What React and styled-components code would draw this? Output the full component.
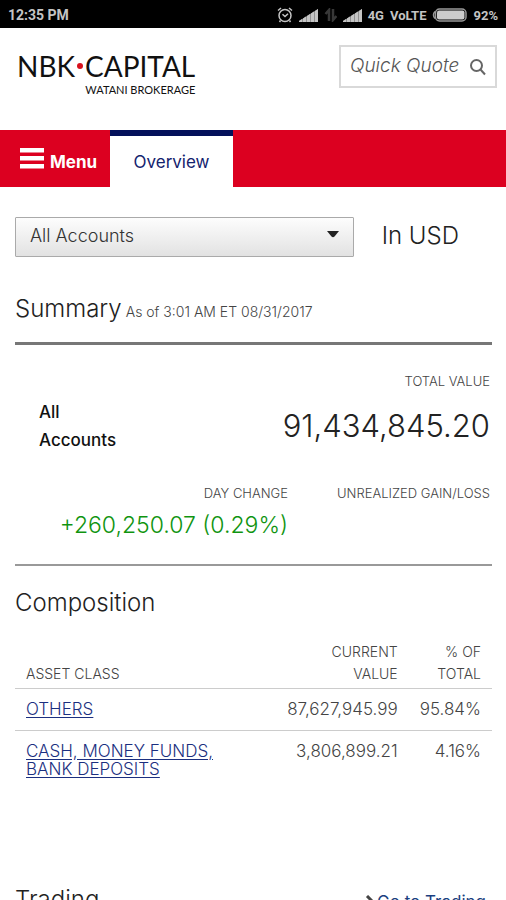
import React, { useState } from "react";
import styled, { createGlobalStyle } from "styled-components";

const GlobalStyle = createGlobalStyle`
  html {
    scrollbar-width: none;
  }
  body {
    margin: 0;
    background: #fff;
    color: #222;
    font-family: Inter, "Open Sans", sans-serif;
    font-size: 17px;
    font-weight: 300;
  }
  * {
    box-sizing: border-box;
  }
`;

const StatusBar = styled.div`
  display: flex;
  align-items: center;
  justify-content: space-between;
  height: 28px;
  padding: 2px 8px 0;
  background: #000;
  color: #c4c4c4;
  font-family: Roboto, sans-serif;
  font-size: 14px;
  font-weight: 700;
`;

const StatusIcons = styled.div`
  display: flex;
  align-items: center;
  gap: 6px;
  font-size: 13px;
`;

const Header = styled.header`
  display: flex;
  justify-content: space-between;
  align-items: flex-start;
  height: 102px;
  padding: 17px 9px 0 17px;
`;

const Logo = styled.a`
  display: flex;
  flex-direction: column;
  align-items: flex-end;
  padding-top: 4px;
  color: #111;
  text-decoration: none;
  font-family: Lato, sans-serif;
`;

const LogoName = styled.span`
  display: flex;
  align-items: center;
  font-size: 28px;
  font-weight: 400;
  line-height: 34px;
`;

const LogoDot = styled.span`
  width: 6px;
  height: 6px;
  margin: 0 2px;
  border-radius: 50%;
  background: #d8101c;
`;

const LogoSub = styled.span`
  font-size: 11px;
  font-weight: 400;
  line-height: 14px;
`;

const Search = styled.form`
  display: flex;
  align-items: center;
  width: 158px;
  height: 43px;
  padding: 0 9px;
  border: 2px solid #d9d9d9;
`;

const SearchInput = styled.input`
  flex: 1;
  min-width: 0;
  padding: 0 0 3px;
  border: 0;
  outline: 0;
  background: none;
  color: #555;
  font: italic 300 19px Inter, sans-serif;

  &::placeholder {
    color: #555;
    opacity: 1;
  }
`;

const SearchButton = styled.button`
  display: flex;
  padding: 0;
  border: 0;
  background: none;
`;

const Nav = styled.nav`
  display: flex;
  height: 57px;
  background: #dc0020;
`;

const MenuButton = styled.button`
  display: flex;
  align-items: center;
  gap: 6px;
  width: 110px;
  padding: 0 0 0 20px;
  border: 0;
  background: none;
  color: #fff;
  font: 700 17px/28px Inter, sans-serif;

  span {
    padding-top: 6px;
  }
`;

const Tab = styled.a`
  width: 123px;
  padding-top: 14px;
  border-top: 6px solid #03105a;
  background: #fff;
  color: #14226e;
  font-size: 17px;
  font-weight: 400;
  line-height: 24px;
  text-align: center;
  text-decoration: none;
`;

const Main = styled.main`
  padding: 30px 14px 0 15px;
`;

const Filters = styled.div`
  display: flex;
  align-items: center;
  gap: 28px;
`;

const SelectWrap = styled.div`
  position: relative;
  width: 71%;
`;

const Select = styled.select`
  appearance: none;
  width: 100%;
  height: 40px;
  padding: 0 14px 4px;
  border: 1px solid #aaa;
  border-radius: 1px;
  background: linear-gradient(#fdfdfd, #e2e2e2);
  color: #333;
  font: 300 18px Inter, sans-serif;
`;

const Arrow = styled.svg`
  position: absolute;
  top: 14px;
  right: 15px;
  pointer-events: none;
`;

const Currency = styled.span`
  padding-bottom: 2px;
  font-size: 24px;
  line-height: 28px;
`;

const Title = styled.h2`
  margin: 0;
  font-size: 24px;
  font-weight: 300;
  line-height: 28px;
`;

const AsOf = styled.small`
  color: #444;
  font-size: 14px;
`;

const Summary = styled.section`
  padding-top: 38px;
  border-bottom: 2px solid #999;
`;

const SummaryHead = styled.div`
  display: flex;
  align-items: baseline;
  gap: 4px;
  padding-bottom: 19px;
  border-bottom: 3px solid #777;
`;

const Row = styled.div`
  display: flex;
  justify-content: space-between;
  padding: ${(props) => props.$padding};
`;

const AccountName = styled.div`
  width: 90px;
  padding-top: 27px;
  color: #111;
  font-weight: 500;
  line-height: 28px;
`;

const Stat = styled.div`
  width: ${(props) => props.$width};
  text-align: right;
`;

const Label = styled.div`
  color: #444;
  font-size: 13px;
  line-height: 20px;
`;

const Total = styled.div`
  padding-top: 15px;
  font-size: 31px;
  line-height: 40px;
`;

const Change = styled.div`
  padding-top: 7px;
  color: #109410;
  font-size: 23px;
  line-height: 30px;
`;

const Composition = styled.section`
  padding-top: 23px;
`;

const Table = styled.table`
  width: 100%;
  margin-top: 24px;
  border-collapse: collapse;
  color: #444;
`;

const Th = styled.th`
  width: ${(props) => props.$width};
  padding: 0 11px 3px;
  text-align: ${(props) => props.$align || "right"};
  vertical-align: bottom;
  font-size: 14px;
  font-weight: 300;
  line-height: 22px;
`;

const Td = styled.td`
  padding: 11px 11px 12px;
  border-top: 1px solid #ccc;
  text-align: ${(props) => props.$align || "right"};
  vertical-align: top;
  line-height: 18px;
`;

const AssetLink = styled.a`
  color: #1b2f80;
  text-underline-offset: 2px;
`;

const Trading = styled.section`
  display: flex;
  justify-content: space-between;
  align-items: center;
  padding: 96px 6px 0 0;
`;

const TradingLink = styled.a`
  display: flex;
  align-items: center;
  gap: 2px;
  padding-top: 4px;
  color: #1b3f80;
  font-weight: 400;
  text-decoration: none;
`;

const assets = [
  { name: "OTHERS", value: "87,627,945.99", percent: "95.84%" },
  { name: "CASH, MONEY FUNDS, BANK DEPOSITS", value: "3,806,899.21", percent: "4.16%" },
];

function AlarmIcon() {
  return (
    <svg width="16" height="16" viewBox="0 0 16 16" fill="none" stroke="#c4c4c4" strokeWidth="1.5">
      <circle cx="8" cy="8.5" r="6" />
      <path d="M1 3.5 4 1M15 3.5 12 1M5.5 7.2 8 9.5l3-2.8M3.5 13.5 2.5 15M12.5 13.5l1 1.5" />
    </svg>
  );
}

function SignalIcon() {
  return (
    <svg width="19" height="13" viewBox="0 0 19 13">
      <path d="M0 13V12L19 0v13z" fill="#909090" />
      <path d="M0 13V12l3-1.900V13zM4 13V9.500l3-1.900V13zM8 13V7l3-1.900V13zM12 13V4.400l3-1.900V13zM16 13V1.900L19 0v13z" fill="#c4c4c4" />
    </svg>
  );
}

function DataIcon() {
  return (
    <svg width="13" height="14" viewBox="0 0 13 14" fill="none" stroke="#383838" strokeWidth="2.500">
      <path d="M5 13V2L1.500 6M9 1v11l3.500-4" />
    </svg>
  );
}

function BatteryIcon() {
  return (
    <svg width="35" height="14" viewBox="0 0 35 14">
      <rect x="3.500" y="1" width="30.500" height="12" rx="4" fill="none" stroke="#999" strokeWidth="1.500" />
      <rect x="5" y="2.500" width="27.500" height="9" rx="2" fill="#ccc" />
      <path d="M3 3.500Q0 7 3 10.500" fill="none" stroke="#999" strokeWidth="1.500" />
    </svg>
  );
}

function App() {
  const [quote, setQuote] = useState("");
  return (
    <>
      <GlobalStyle />
      <StatusBar>
        <span>12:35 PM</span>
        <StatusIcons>
          <AlarmIcon />
          <SignalIcon />
          <DataIcon />
          <SignalIcon />
          <span>4G</span>
          <span>VoLTE</span>
          <BatteryIcon />
          <span>92%</span>
        </StatusIcons>
      </StatusBar>

      <Header>
        <Logo href="#">
          <LogoName>
            NBK
            <LogoDot />
            CAPITAL
          </LogoName>
          <LogoSub>WATANI BROKERAGE</LogoSub>
        </Logo>
        <Search onSubmit={(e) => e.preventDefault()}>
          <SearchInput
            aria-label="Quick Quote"
            placeholder="Quick Quote"
            value={quote}
            onChange={(e) => setQuote(e.target.value)}
          />
          <SearchButton type="submit" aria-label="Search">
            <svg width="17" height="18" viewBox="0 0 17 18" fill="none" stroke="#666" strokeWidth="2">
              <circle cx="7.500" cy="7.500" r="5.500" />
              <path d="m11.500 11.500 4.500 5" />
            </svg>
          </SearchButton>
        </Search>
      </Header>

      <Nav>
        <MenuButton type="button">
          <svg width="24" height="21" viewBox="0 0 24 21" fill="#fff">
            <path d="M0 0h24v4.500H0zM0 8h24v4.500H0zM0 16h24v4.500H0z" />
          </svg>
          <span>Menu</span>
        </MenuButton>
        <Tab href="#overview">Overview</Tab>
      </Nav>

      <Main>
        <Filters>
          <SelectWrap>
            <Select aria-label="Account">
              <option>All Accounts</option>
            </Select>
            <Arrow width="12" height="7" viewBox="0 0 12 7">
              <path d="M0 0h12L7.500 5.500Q6 7 4.500 5.500z" fill="#222" />
            </Arrow>
          </SelectWrap>
          <Currency>In USD</Currency>
        </Filters>

        <Summary>
          <SummaryHead>
            <Title>Summary</Title>
            <AsOf>As of 3:01 AM ET 08/31/2017</AsOf>
          </SummaryHead>
          <Row $padding="26px 2px 0 24px">
            <AccountName>All Accounts</AccountName>
            <Stat>
              <Label>TOTAL VALUE</Label>
              <Total>91,434,845.20</Total>
            </Stat>
          </Row>
          <Row $padding="29px 2px 24px 0">
            <Stat $width="273px">
              <Label>DAY CHANGE</Label>
              <Change>+260,250.07 (0.29%)</Change>
            </Stat>
            <Stat>
              <Label>UNREALIZED GAIN/LOSS</Label>
            </Stat>
          </Row>
        </Summary>

        <Composition>
          <Title>Composition</Title>
          <Table>
            <thead>
              <tr>
                <Th $align="left" $width="47%">ASSET CLASS</Th>
                <Th>
                  CURRENT
                  <br />
                  VALUE
                </Th>
                <Th $width="83px">
                  % OF
                  <br />
                  TOTAL
                </Th>
              </tr>
            </thead>
            <tbody>
              {assets.map((asset) => (
                <tr key={asset.name}>
                  <Td $align="left">
                    <AssetLink href="#">{asset.name}</AssetLink>
                  </Td>
                  <Td>{asset.value}</Td>
                  <Td>{asset.percent}</Td>
                </tr>
              ))}
            </tbody>
          </Table>
        </Composition>

        <Trading>
          <Title>Trading</Title>
          <TradingLink href="#trading">
            <svg width="10" height="14" viewBox="0 0 10 14" fill="none" stroke="#444" strokeWidth="3">
              <path d="m2 1 6 6-6 6" />
            </svg>
            Go to Trading
          </TradingLink>
        </Trading>
      </Main>
    </>
  );
}

export default App;
